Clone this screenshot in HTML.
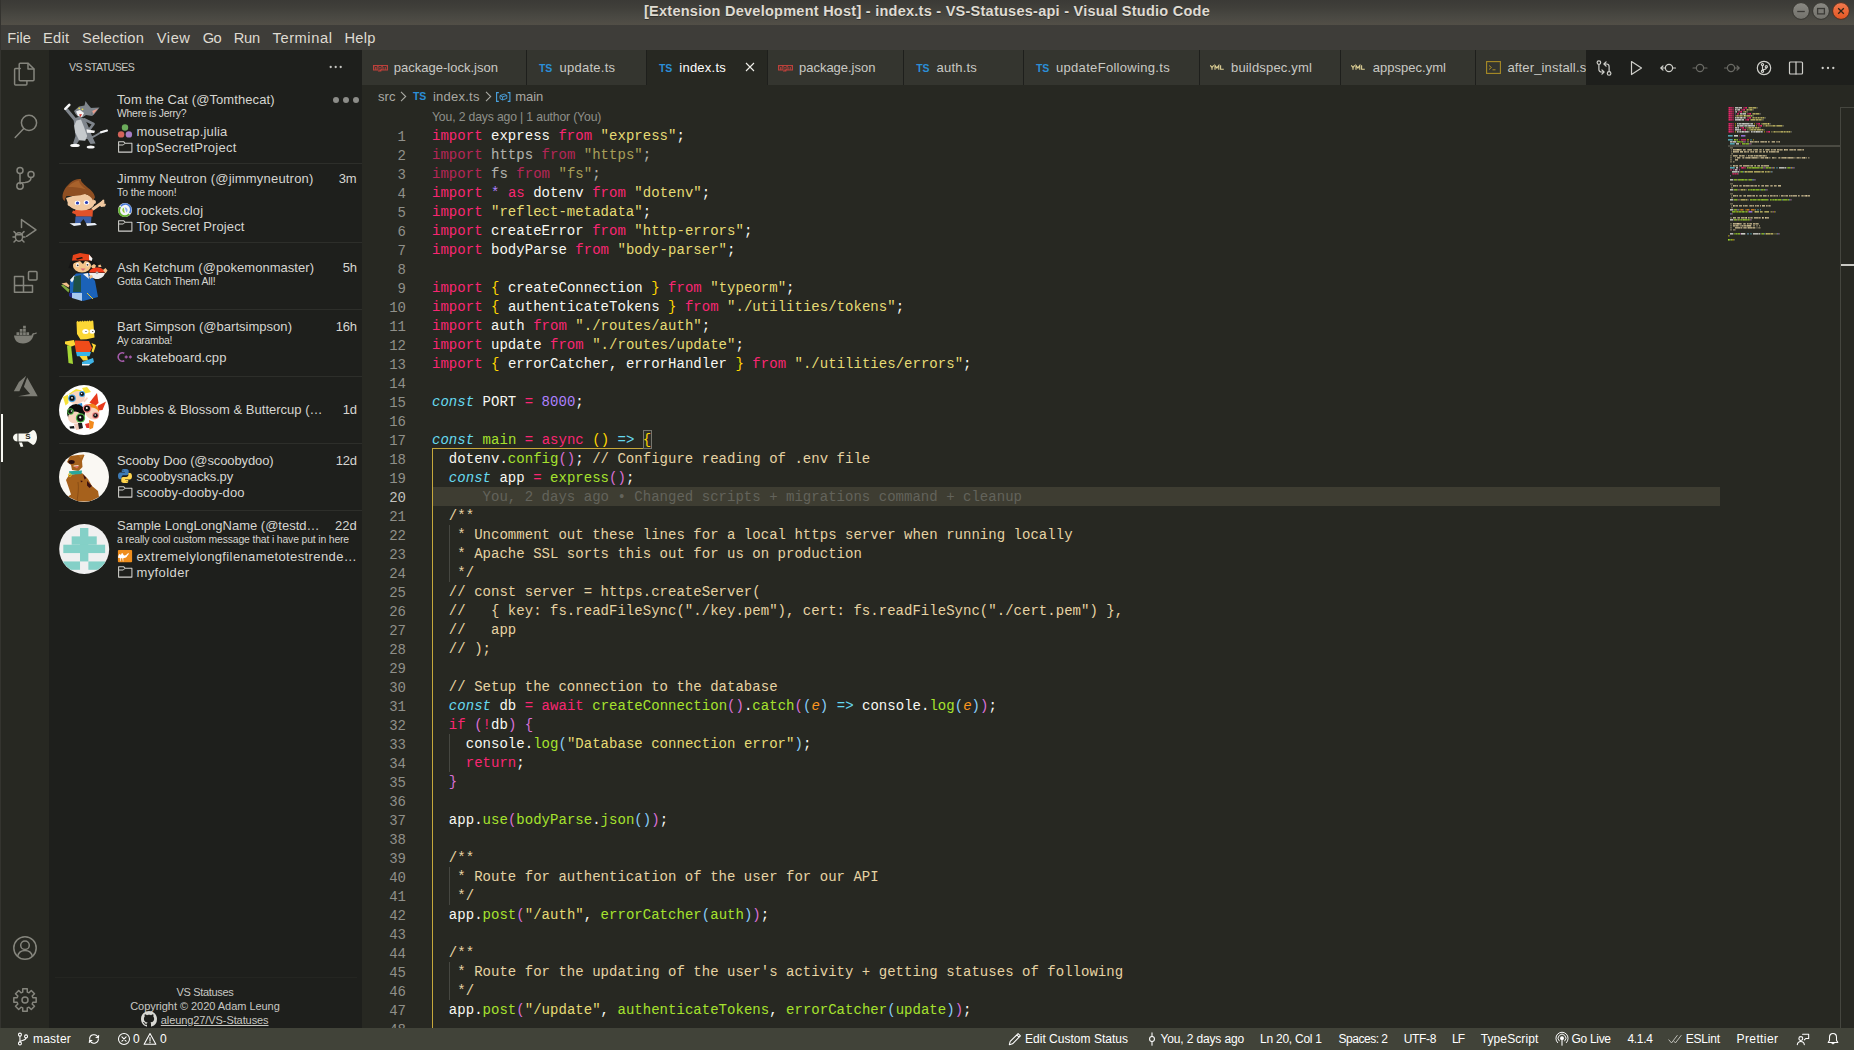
<!DOCTYPE html>
<html><head><meta charset="utf-8"><title>index.ts - VS-Statuses-api - Visual Studio Code</title>
<style>
*{box-sizing:border-box;margin:0;padding:0}
html,body{width:1854px;height:1050px;overflow:hidden;background:#272822;font-family:"Liberation Sans",sans-serif;color:#f8f8f2}
body{position:relative}
.a{position:absolute;white-space:pre}
svg{display:block;overflow:visible}
/* title / menu */
#title{left:0;top:0;width:1854px;height:25px;background:linear-gradient(#3b3a36,#403f3a 30%,#494842 65%,#524f47)}
#menu{left:0;top:25px;width:1854px;height:25px;background:#3e3d39}
.mi{position:absolute;top:1px;height:25px;line-height:25px;color:#dfdbd2;white-space:pre}
/* activity bar */
#act{left:0;top:50px;width:49px;height:978px;background:#272822}
/* sidebar */
#side{left:49px;top:50px;width:313px;height:978px;background:#1e1f1c;overflow:hidden}
.sep{position:absolute;left:10px;width:303px;height:1px;background:#2d2e2a}
.nm{color:#d8d8d3;line-height:16px}
.msg{color:#d0d0cb;line-height:12px}
.fl{color:#d8d8d3;line-height:16px}
/* editor */
#tabs{left:362px;top:50px;width:1492px;height:35px;background:#1e1f1c;overflow:hidden}
.tab{position:absolute;top:0;height:35px;background:#34352f;color:#ccccc7;line-height:35px;white-space:pre}
.tab.on{background:#272822;color:#fff}
#code{left:362px;top:126px;width:1358px;height:902px;overflow:hidden;font-family:"Liberation Mono",monospace;font-size:14px;letter-spacing:0.0273px;line-height:19px;color:#f8f8f2}
.ln{position:absolute;left:0;width:44px;text-align:right;color:#90908a;white-space:pre;height:19px;padding-top:2px}
.cl{position:absolute;left:70px;white-space:pre;height:19px;padding-top:1px}
.k{color:#f92672}.s{color:#e6db74}.c{color:#e6d3a3}.f{color:#a6e22e}.t{color:#66d9ef;font-style:italic}.ar{color:#66d9ef}
.n{color:#ae81ff}.p{color:#fd971f;font-style:italic}.b1{color:#ffd700}.b2{color:#da70d6}.b3{color:#87cefa}
.fade{opacity:.667}
.ig{position:absolute;width:1px;background:#464741}
/* status */
#status{left:0;top:1028px;width:1854px;height:22px;background:#414339;color:#fff;font-size:12px;line-height:22px}
.si{position:absolute;top:0;height:22px;line-height:22px;white-space:pre;color:#fff}
.bl{color:#63635b}

</style></head>
<body>
<div class="a" id="title"><div class="a" style="left:644px;top:0;height:23px;line-height:22px;font-weight:bold;font-size:14.5px;letter-spacing:0.257px;color:#dfdbd2;text-shadow:0 1px 0 rgba(0,0,0,.35)">[Extension Development Host] - index.ts - VS-Statuses-api - Visual Studio Code</div>
<svg class="a" style="left:1791px;top:1.200px" width="62" height="22" viewBox="0 0 62 22">
<defs><linearGradient id="gb" x1="0" y1="0" x2="0" y2="1"><stop offset="0" stop-color="#8a8983"/><stop offset="1" stop-color="#72716b"/></linearGradient>
<linearGradient id="gc" x1="0" y1="0" x2="0" y2="1"><stop offset="0" stop-color="#f27a4e"/><stop offset="1" stop-color="#e45622"/></linearGradient></defs>
<circle cx="10" cy="10" r="8.400" fill="url(#gb)" stroke="#35342f" stroke-width="1"/>
<circle cx="30" cy="10" r="8.400" fill="url(#gb)" stroke="#35342f" stroke-width="1"/>
<circle cx="50" cy="10" r="8.400" fill="url(#gc)" stroke="#4a3024" stroke-width="1"/>
<path d="M6.200 10.500h7.600" stroke="#3b3a36" stroke-width="1.300" fill="none"/>
<rect x="26.600" y="7.500" width="6.800" height="5.400" fill="#7b7a74" stroke="#3b3a36" stroke-width="1.300"/>
<path d="M47.200 7.200l5.600 5.600M52.800 7.200l-5.600 5.600" stroke="#2e2418" stroke-width="1.300" fill="none"/>
</svg>
</div>
<div class="a" id="menu">
<div class="mi" style="left:7.25px;font-size:14.667px;letter-spacing:0.031px">File</div>
<div class="mi" style="left:43px;font-size:14.667px;letter-spacing:0.309px">Edit</div>
<div class="mi" style="left:82px;font-size:14.667px;letter-spacing:0.189px">Selection</div>
<div class="mi" style="left:156.75px;font-size:14.667px;letter-spacing:0.559px">View</div>
<div class="mi" style="left:202.75px;font-size:14.667px;letter-spacing:-0.656px">Go</div>
<div class="mi" style="left:233.75px;font-size:14.667px;letter-spacing:-0.214px">Run</div>
<div class="mi" style="left:272.5px;font-size:14.667px;letter-spacing:0.576px">Terminal</div>
<div class="mi" style="left:344.5px;font-size:14.667px;letter-spacing:0.273px">Help</div>
</div>
<div class="a" id="act"><div class="a" style="left:0;top:0;width:1px;height:978px;background:#34342f"></div>
<svg class="a" style="left:11.8px;top:12.0px" width="24" height="24" viewBox="0 0 24 24" fill="none" stroke="#85857d" stroke-width="1.5" stroke-linejoin="round" stroke-linecap="round"><path d="M8.2 6.5H3.6a1 1 0 0 0-1 1V22a1 1 0 0 0 1 1h10.3a1 1 0 0 0 1-1v-3.2"/><path d="M8.2 1.2h8l5.8 5.8v10.8a1 1 0 0 1-1 1H8.2a1 1 0 0 1-1-1V2.2a1 1 0 0 1 1-1z"/><path d="M16 1.4V7h5.8"/></svg>
<svg class="a" style="left:13.5px;top:64.0px" width="24" height="24" viewBox="0 0 24 24" fill="none" stroke="#85857d" stroke-width="1.5" stroke-linejoin="round" stroke-linecap="round"><circle cx="15" cy="8.8" r="7.6"/><path d="M9.8 14.6L1.2 23.4"/></svg>
<svg class="a" style="left:13.0px;top:116.0px" width="24" height="24" viewBox="0 0 24 24" fill="none" stroke="#85857d" stroke-width="1.5" stroke-linejoin="round" stroke-linecap="round"><circle cx="7" cy="4.5" r="3"/><circle cx="7" cy="20" r="3.2"/><circle cx="18" cy="8.5" r="3"/><path d="M7 7.5v9.3"/><path d="M18 11.5c0 3.5-3 4.8-6 4.9-2.8 0-4.6.6-5 1.5"/></svg>
<svg class="a" style="left:13.3px;top:167.5px" width="24" height="24" viewBox="0 0 24 24" fill="none" stroke="#85857d" stroke-width="1.5" stroke-linejoin="round" stroke-linecap="round"><path d="M8.5 9.5V1.6L23 11.8 13.5 18.3"/><ellipse cx="6" cy="19" rx="3.6" ry="4.2"/><path d="M3.2 15.8L1 13.6M8.8 15.8L11 13.6M2.4 19H0M9.6 19H12M3 22L1 24M9 22l2 2M2.6 16.8h6.8"/></svg>
<svg class="a" style="left:12.600000000000001px;top:220.2px" width="24" height="24" viewBox="0 0 24 24" fill="none" stroke="#85857d" stroke-width="1.5" stroke-linejoin="round" stroke-linecap="round"><path d="M1.5 6.5h9v9h-9zM1.5 15.5h9v6.8h-9M10.5 15.5h9v6.8h-18v-6.8M10.5 15.5v6.8"/><rect x="15.5" y="1.5" width="8.5" height="8.5" rx="1"/></svg>
<svg class="a" style="left:12.5px;top:272.5px" width="24" height="24" viewBox="0 0 24 24" fill="#7e7e76" stroke="none" stroke-width="0" stroke-linejoin="round" stroke-linecap="round"><path d="M1 12.5h17.5c.5-1.8 1.5-3 3.2-2.3.8-.9 1.8-.7 2.3-.2-1 1-1.400 1.300-3.300 1.500C19.500 17 16 20.500 10 20.500 4.500 20.500 1.500 17.500 1 12.500z"/><path d="M3.500 9.200h2.700v2.700H3.500zM6.800 9.200h2.700v2.700H6.800zM10.100 9.200h2.700v2.700h-2.700zM13.400 9.200h2.700v2.700h-2.700zM6.800 6h2.700v2.700H6.800zM10.100 6h2.700v2.700h-2.700zM10.100 2.800h2.700v2.700h-2.700z"/></svg>
<svg class="a" style="left:13.0px;top:323.2px" width="24" height="24" viewBox="0 0 24 24" fill="#7e7e76" stroke="none" stroke-width="0" stroke-linejoin="round" stroke-linecap="round"><path d="M13.200 2.800L5.900 9.100 0.800 18.300h5.600zM14.200 4.500l-3.300 9.200 6.200 7.400-12 2.100h19.600z"/></svg>
<div class="a" style="left:1px;top:364px;width:2px;height:48px;background:#f8f8f2"></div>
<svg class="a" style="left:13.0px;top:376.0px" width="24" height="24" viewBox="0 0 24 24" fill="#f8f8f2" stroke="none" stroke-width="0" stroke-linejoin="round" stroke-linecap="round"><path d="M4.500 7.500A4.500 4 0 0 0 4.500 15.500z"/><path d="M5.400 7.500H15L20 4c2 0 4 3.500 4 7.300S22 19 20 19l-5-3.500H5.400z"/><path d="M5.900 16.400H9l1.300 4-2.600.700z"/></svg>
<div class="a" style="left:25.300px;top:382.200px;font-size:8px;font-weight:bold;color:#272822;line-height:9px">S</div>
<svg class="a" style="left:13.0px;top:886.0px" width="24" height="24" viewBox="0 0 24 24" fill="none" stroke="#85857d" stroke-width="1.5" stroke-linejoin="round" stroke-linecap="round"><circle cx="12" cy="12" r="11.200"/><circle cx="12" cy="9.300" r="4.300"/><path d="M4.600 20.300c1-4 4-5.800 7.400-5.800s6.400 1.800 7.400 5.800"/></svg>
<svg class="a" style="left:13.0px;top:938.0px" width="24" height="24" viewBox="0 0 24 24" fill="none" stroke="#85857d" stroke-width="1.5" stroke-linejoin="round" stroke-linecap="round"><path d="M9.73 4.12 L9.74 0.83 L14.26 0.83 L14.27 4.12 L15.97 4.83 L18.30 2.50 L21.50 5.70 L19.17 8.03 L19.88 9.73 L23.17 9.74 L23.17 14.26 L19.88 14.27 L19.17 15.97 L21.50 18.30 L18.30 21.50 L15.97 19.17 L14.27 19.88 L14.26 23.17 L9.74 23.17 L9.73 19.88 L8.03 19.17 L5.70 21.50 L2.50 18.30 L4.83 15.97 L4.12 14.27 L0.83 14.26 L0.83 9.74 L4.12 9.73 L4.83 8.03 L2.50 5.70 L5.70 2.50 L8.03 4.83Z"/><circle cx="12" cy="12" r="3"/></svg>
</div>
<div class="a" style="left:0;top:0;width:1px;height:50px;background:#34332f"></div>
<div class="a" id="side">
<div class="a" style="left:20px;top:7px;line-height:18px;color:#c5c5c0"><span style="font-size:10.6px;letter-spacing:-0.567px;">VS STATUSES</span></div>
<svg class="a" style="left:280px;top:10px" width="14" height="14" viewBox="0 0 14 14"><circle cx="1.700" cy="7" r="1.150" fill="#c5c5c0"/><circle cx="6.700" cy="7" r="1.150" fill="#c5c5c0"/><circle cx="11.700" cy="7" r="1.150" fill="#c5c5c0"/></svg>
<div class="sep" style="top:113px"></div>
<div class="sep" style="top:192px"></div>
<div class="sep" style="top:259px"></div>
<div class="sep" style="top:326px"></div>
<div class="sep" style="top:393px"></div>
<div class="sep" style="top:460px"></div>
<div class="a" style="left:68px;top:41px;line-height:16px;color:#d6d6d1"><span style="font-size:13px;letter-spacing:0.086px;">Tom the Cat (@Tomthecat)</span></div>
<svg class="a" style="left:283px;top:46px" width="28" height="8" viewBox="0 0 28 8"><circle cx="4" cy="4" r="3" fill="#8c8c88"/><circle cx="14" cy="4" r="3" fill="#8c8c88"/><circle cx="24" cy="4" r="3" fill="#8c8c88"/></svg>
<div class="a" style="left:68px;top:56px;line-height:12px;color:#d6d6d1"><span style="font-size:10.4px;letter-spacing:-0.237px;">Where is Jerry?</span></div>
<svg class="a" style="left:68px;top:73px" width="16" height="16" viewBox="0 0 16 16"><circle cx="8" cy="4.500" r="3.200" fill="#6bab5b"/><circle cx="4.100" cy="11.400" r="3.200" fill="#d5635a"/><circle cx="11.900" cy="11.400" r="3.200" fill="#a67dc4"/></svg><div class="a" style="left:87.5px;top:73px;line-height:16px;color:#d6d6d1"><span style="font-size:13px;letter-spacing:0.190px;">mousetrap.julia</span></div>
<svg class="a" style="left:68px;top:89px" width="16" height="16" viewBox="0 0 16 16"><path d="M1.600 2.700h5l1.300 1.500h7v8.900H1.600z" fill="none" stroke="#d0d0cb" stroke-width="1.050" stroke-linejoin="round"/><path d="M1.600 6h4.700l1.600-1.600" fill="none" stroke="#d0d0cb" stroke-width="1"/></svg><div class="a" style="left:87.5px;top:89px;line-height:16px;color:#d6d6d1"><span style="font-size:13px;letter-spacing:0.243px;">topSecretProject</span></div>
<div class="a" style="left:68px;top:120px;line-height:16px;color:#d6d6d1"><span style="font-size:13px;letter-spacing:0.193px;">Jimmy Neutron (@jimmyneutron)</span></div><div class="a" style="left:289.70000000000005px;top:120px;line-height:16px;color:#d6d6d1"><span style="font-size:13px;letter-spacing:-0.081px;">3m</span></div>
<div class="a" style="left:68px;top:135px;line-height:12px;color:#d6d6d1"><span style="font-size:10.4px;letter-spacing:-0.048px;">To the moon!</span></div>
<svg class="a" style="left:68px;top:152px" width="16" height="16" viewBox="0 0 16 16"><circle cx="8" cy="8" r="7" fill="#f4f6f8"/><path d="M3.800 4.200A5.600 5.600 0 0 1 12.700 11" fill="none" stroke="#4a7bd6" stroke-width="1.700"/><path d="M12.200 12A5.600 5.600 0 0 1 3.300 5" fill="none" stroke="#63b132" stroke-width="1.900"/><path d="M8 5.200a3 3 0 0 1 1.500 5.300L7.600 5.300z" fill="#8fb5f0"/><path d="M6.300 5.800a3 3 0 0 0 1.500 5.200L6.800 6z" fill="#8fce3e"/></svg><div class="a" style="left:87.5px;top:152px;line-height:16px;color:#d6d6d1"><span style="font-size:13px;letter-spacing:0.147px;">rockets.cloj</span></div>
<svg class="a" style="left:68px;top:168px" width="16" height="16" viewBox="0 0 16 16"><path d="M1.600 2.700h5l1.300 1.500h7v8.900H1.600z" fill="none" stroke="#d0d0cb" stroke-width="1.050" stroke-linejoin="round"/><path d="M1.600 6h4.700l1.600-1.600" fill="none" stroke="#d0d0cb" stroke-width="1"/></svg><div class="a" style="left:87.5px;top:168px;line-height:16px;color:#d6d6d1"><span style="font-size:13px;letter-spacing:0.099px;">Top Secret Project</span></div>
<div class="a" style="left:68px;top:209px;line-height:16px;color:#d6d6d1"><span style="font-size:13px;letter-spacing:0.036px;">Ash Ketchum (@pokemonmaster)</span></div><div class="a" style="left:293.8px;top:209px;line-height:16px;color:#d6d6d1"><span style="font-size:13px;letter-spacing:-0.334px;">5h</span></div>
<div class="a" style="left:68px;top:224px;line-height:12px;color:#d6d6d1"><span style="font-size:10.4px;letter-spacing:-0.145px;">Gotta Catch Them All!</span></div>
<div class="a" style="left:68px;top:268px;line-height:16px;color:#d6d6d1"><span style="font-size:13px;letter-spacing:0.025px;">Bart Simpson (@bartsimpson)</span></div><div class="a" style="left:286.8px;top:268px;line-height:16px;color:#d6d6d1"><span style="font-size:13px;letter-spacing:-0.301px;">16h</span></div>
<div class="a" style="left:68px;top:283px;line-height:12px;color:#d6d6d1"><span style="font-size:10.4px;letter-spacing:-0.286px;">Ay caramba!</span></div>
<svg class="a" style="left:68px;top:299px" width="16" height="16" viewBox="0 0 16 16"><path d="M7.300 4.300a4.200 4.200 0 1 0 0 7.400" fill="none" stroke="#a35aa8" stroke-width="1.600"/><path d="M7.700 8h3M9.200 6.500v3M11.900 8h3M13.400 6.500v3" stroke="#a35aa8" stroke-width="1.300" fill="none"/></svg><div class="a" style="left:87.5px;top:299px;line-height:16px;color:#d6d6d1"><span style="font-size:13px;letter-spacing:0.078px;">skateboard.cpp</span></div>
<div class="a" style="left:68px;top:351px;line-height:16px;color:#d6d6d1"><span style="font-size:13px;letter-spacing:0.012px;">Bubbles &amp; Blossom &amp; Buttercup (…</span></div><div class="a" style="left:293.8px;top:351px;line-height:16px;color:#d6d6d1"><span style="font-size:13px;letter-spacing:-0.334px;">1d</span></div>
<div class="a" style="left:68px;top:402px;line-height:16px;color:#d6d6d1"><span style="font-size:13px;letter-spacing:-0.116px;">Scooby Doo (@scoobydoo)</span></div><div class="a" style="left:286.8px;top:402px;line-height:16px;color:#d6d6d1"><span style="font-size:13px;letter-spacing:-0.301px;">12d</span></div>
<svg class="a" style="left:68px;top:418px" width="16" height="16" viewBox="0 0 16 16"><path d="M7.800 1c-3.200 0-3 1.400-3 1.400v1.700h3.100v.5H3.400S1 4.400 1 7.900c0 3.400 2.100 3.300 2.100 3.300h1.500V9.300s-.1-2.100 2.100-2.100h3s2 0 2-1.900V2.900S12 1 7.800 1z" fill="#3d7ab5"/><path d="M8.200 15.100c3.200 0 3-1.400 3-1.400V12H8.100v-.5h4.500s2.400.2 2.400-3.300c0-3.400-2.100-3.300-2.100-3.300h-1.500v1.900s.1 2.100-2.100 2.100h-3s-2 0-2 1.900v2.400s-.3 1.900 3.900 1.900z" fill="#ffd54d"/><circle cx="6" cy="2.600" r=".6" fill="#1e3a5a"/><circle cx="10" cy="13.500" r=".6" fill="#8a6d1a"/></svg><div class="a" style="left:87.5px;top:418px;line-height:16px;color:#d6d6d1"><span style="font-size:13px;letter-spacing:-0.167px;">scoobysnacks.py</span></div>
<svg class="a" style="left:68px;top:434px" width="16" height="16" viewBox="0 0 16 16"><path d="M1.600 2.700h5l1.300 1.500h7v8.900H1.600z" fill="none" stroke="#d0d0cb" stroke-width="1.050" stroke-linejoin="round"/><path d="M1.600 6h4.700l1.600-1.600" fill="none" stroke="#d0d0cb" stroke-width="1"/></svg><div class="a" style="left:87.5px;top:434px;line-height:16px;color:#d6d6d1"><span style="font-size:13px;letter-spacing:0.064px;">scooby-dooby-doo</span></div>
<div class="a" style="left:68px;top:467px;line-height:16px;color:#d6d6d1"><span style="font-size:13px;letter-spacing:-0.001px;">Sample LongLongName (@testd…</span></div><div class="a" style="left:286.1px;top:467px;line-height:16px;color:#d6d6d1"><span style="font-size:13px;letter-spacing:-0.068px;">22d</span></div>
<div class="a" style="left:68px;top:482px;line-height:12px;color:#d6d6d1"><span style="font-size:10.4px;letter-spacing:-0.148px;">a really cool custom message that i have put in here</span></div>
<svg class="a" style="left:68px;top:498px" width="16" height="16" viewBox="0 0 16 16"><rect x=".9" y="2" width="14.200" height="12.200" rx="1" fill="#ee8d1c"/><path d="M1 9.800c.2-1.700.7-3.700 1.600-3.900.7.400.9 1.100 1.400.9.500-.700.700-1.900 1.300-1.700.7.500.8 1.700 1.600 2.100 1.200.5 2.500-.1 3.100-1.100.5-.7 1.200-.8 2-.7l-.3.800c-1 .5-1.300 1.900-2.100 2.800-.7.800-2 1-3.400 1.200l.2 3.200h-.5l-.6-3.100-1.500-.1-.3 3h-.5l-.1-3.100z" fill="#fff"/></svg><div class="a" style="left:87.5px;top:498px;line-height:16px;color:#d6d6d1"><span style="font-size:13px;letter-spacing:0.379px;">extremelylongfilenametotestrende…</span></div>
<svg class="a" style="left:68px;top:514px" width="16" height="16" viewBox="0 0 16 16"><path d="M1.600 2.700h5l1.300 1.500h7v8.900H1.600z" fill="none" stroke="#d0d0cb" stroke-width="1.050" stroke-linejoin="round"/><path d="M1.600 6h4.700l1.600-1.600" fill="none" stroke="#d0d0cb" stroke-width="1"/></svg><div class="a" style="left:87.5px;top:514px;line-height:16px;color:#d6d6d1"><span style="font-size:13px;letter-spacing:0.393px;">myfolder</span></div>
<svg class="a" style="left:7px;top:42px" width="56" height="64" viewBox="0 0 56 64">
<path d="M35.500 45.500c3-1 6.500-3.500 9-5l6.500-1.800" fill="none" stroke="#7f858c" stroke-width="1.900" stroke-linecap="round"/>
<path d="M45 40.200l6-1.700" fill="none" stroke="#f4f4f4" stroke-width="2" stroke-linecap="round"/>
<path d="M18.500 27L11 18" fill="none" stroke="#7f858c" stroke-width="3.300" stroke-linecap="round"/>
<path d="M9.300 16.800l4-4" stroke="#f6f6f6" stroke-width="2.600" stroke-linecap="round"/>
<path d="M17.500 26.500l6.500-2 5 2.500 4 9 3 8 3.500 7.500-5 .5-3-5h-7.500l-3.500 5.500-3.500-1 2.500-7.500-1-8z" fill="#7f858c"/>
<path d="M28.500 27.500l9 4.500-4.300 5.800" fill="none" stroke="#7f858c" stroke-width="2.700" stroke-linejoin="round" stroke-linecap="round"/>
<path d="M30.500 37.300l8.500 1.500-.800 2.200-7.200-.3z" fill="#f4f4f4"/>
<path d="M20.500 28.500l4.500-1 3 7.500 3.200 9-2 4.700-6.200-.5-3.800-8-1-6.500z" fill="#c6cacd"/>
<ellipse cx="19" cy="53.400" rx="4.800" ry="1.700" fill="#f8f8f8"/><ellipse cx="34.700" cy="55" rx="4" ry="1.600" fill="#f8f8f8"/>
<path d="M18 19l5-4.500 5.500-1 1-4.500 2.500 3.500 3 3.500 1 8-6-1-3 2-5-.5-2.500-2.500z" fill="#7f858c"/>
<path d="M34 16l9.500-.5-5.500 7-2 1.500z" fill="#7f858c"/><path d="M36.200 19l5.800-2.500-4.500 5.500z" fill="#e89b8b"/>
<path d="M20 19.500l4-1.500 4 3-2 4-4-1z" fill="#f4f4f4"/><path d="M23 22.500l3-.5-1.500 3z" fill="#d0302b"/>
<circle cx="23.200" cy="16.300" r=".9" fill="#e5d94b"/><circle cx="26.500" cy="17.300" r=".9" fill="#e5d94b"/>
</svg>
<svg class="a" style="left:7px;top:121px" width="56" height="64" viewBox="0 0 56 64">
<path d="M37 38l10-7" stroke="#f0c8a0" stroke-width="3" stroke-linecap="round"/>
<path d="M43 33l4-4.500 1.500.5-1.500 3 3 1-1 2.500-4 .5z" fill="#f0c8a0"/>
<path d="M17 39.500l4 1-1 3-4-1.500z" fill="#e2522a"/>
<path d="M19 39l18-.5-.5 7.200-16.500-.2z" fill="#e2522a"/>
<path d="M19.500 45.500h16l-.5 6.700h-5l-2.500-4.200-3.500 4.200h-5z" fill="#3d5fa5"/>
<path d="M13.500 52.200l11-.2.500 2-7 1z" fill="#e9eef8"/><path d="M30 52.300l9-.3 2 2-10 1z" fill="#e9eef8"/>
<path d="M10 27l17-5 10 4 1 7-5 5-13 .5-7-3.500z" fill="#f0c8a0"/><ellipse cx="25.500" cy="31.500" rx="13" ry="8" fill="#f0c8a0"/>
<circle cx="13.500" cy="33" r="2" fill="#f0c8a0"/><circle cx="38" cy="31" r="2" fill="#f0c8a0"/>
<ellipse cx="21.500" cy="32" rx="2.800" ry="2.200" fill="#fff"/><ellipse cx="30.500" cy="31.500" rx="2.800" ry="2.200" fill="#fff"/>
<circle cx="21.500" cy="32" r="1.600" fill="#2b3fb5"/><circle cx="30.500" cy="31.500" r="1.600" fill="#2b3fb5"/>
<path d="M6.500 26c0-6 4-11 8-14.500 3-2.500 6-3.800 10.500-3.500-1 1.500 2.500 5 6 8 4 3 7.500 6 8 10.500l-2 3c-1.500-3-4-5.500-8-6.500-6 2-12 2-18.500 2-1 1.500-1.500 3-1.500 5-1.500-1-2.500-2-2.500-4z" fill="#8f4f22"/>
<path d="M12 16c3-3 6-5.500 11-6.500 0 3 3 6 7 9-6-2-12-2.500-18-2.500z" fill="#a8622c"/>
</svg>
<svg class="a" style="left:7px;top:196px" width="56" height="64" viewBox="0 0 56 64">
<path d="M12.500 22l2-6 6-3h14l7.500 5-4.500 3.500-3 3z" fill="#151515"/>
<path d="M5.500 37.500l5-1 3 3-1 2z" fill="#f3c089"/><path d="M5 39.500l2-1 6.500 5-1 3z" fill="#7ea83e"/>
<path d="M14 34l6-6.500 13-.5 6 8 3 16-15 4-13-7z" fill="#1b62b8"/>
<path d="M14 34l4-4.500 2 1-4 6z" fill="#f2f2f2"/><path d="M27 28l5-1 1 6z" fill="#f2f2f2"/>
<path d="M18 30.500l7-1.500v17h-8z" fill="#1f5045"/>
<path d="M16 47h10v8l-10-3z" fill="#a6c8ef"/>
<path d="M13 47l3 0v5l-3-2z" fill="#232a8a"/>
<path d="M31 47l6 6" stroke="#e8c832" stroke-width="1"/>
<ellipse cx="26" cy="20" rx="9" ry="6.500" fill="#f5c58b"/>
<path d="M18 17l6-2 3 3 2-3 6 1-1-3H18z" fill="#151515"/>
<ellipse cx="21.500" cy="19" rx="1.500" ry="2" fill="#fff"/><ellipse cx="31.500" cy="18.500" rx="1.500" ry="2" fill="#fff"/>
<circle cx="21.700" cy="19.300" r=".9" fill="#333"/><circle cx="31.500" cy="18.800" r=".9" fill="#333"/>
<path d="M24.500 22.500h5l-2.500 2.500z" fill="#d96a7a"/>
<path d="M16 14.500l1-5.500 7-2 9 1.500 3 3.500-1 2.500H16z" fill="#e8431a"/><path d="M33 8.500l3.500 4-.8 2.500-2.500-1z" fill="#f4f4f4"/>
<path d="M20 12.500l6-1.500 1 1.200-6 1.500z" fill="#151515"/>
<path d="M33 26.500c1-3 3.500-5 8-5s7 2 8 5z" fill="#f03a1a"/>
<path d="M33 27h16c-1 3.500-4 6-8 6s-7-2.500-8-6z" fill="#eeeeee"/><circle cx="41" cy="26.800" r="1.400" fill="#aaa"/>
<path d="M47 24l2.500-2 2 2.500-2 3z" fill="#f3c089"/><path d="M33 30l3-1 1 2-3 2z" fill="#f3c089"/>
<path d="M35 20l3-2 2 1.500-1 2.500h-3z" fill="#f3c089"/><path d="M42 19.500l2.500-1 1 2.500h-3z" fill="#f3c089"/>
</svg>
<svg class="a" style="left:7px;top:262px" width="56" height="64" viewBox="0 0 56 64">
<path d="M11 33.500l4-.5 2 19-4.500-1z" fill="#a4d636"/>
<path d="M9 29.500l9-1.500 1.500 5-4 1.500-6.500-2.500z" fill="#fcd735"/>
<path d="M35.500 31l4.500 2-2.500 7.500-2-1 1.500-5z" fill="#fcd735"/>
<path d="M19 28.500l14 .5 3 7-2 4H20l-1-6z" fill="#f04c1a"/>
<path d="M20 40h15l-1.500 4.200H21z" fill="#36b5e8"/>
<path d="M23.500 44h7.500l1 4.500h-5z" fill="#fcd735"/>
<path d="M26 50l11-4 1 4-5 3h-7z" fill="#3fb3e6"/><path d="M26 52h8l-1 1.500h-7z" fill="#f2f2f2"/>
<path d="M20.500 10l1.200-1.200 1.200 1.100 1.200-1.200 1.200 1.100 1.200-1.200 1.200 1.100 1.200-1.200 1.200 1.100 1.200-1.200 1.200 1.100 1.200-1.200 1.200 1.100 1.200-1.200 1.200 1.100L38.500 25.500l-8 1.700-6 .3-3.500-5.500z" fill="#fcd735"/>
<ellipse cx="29.500" cy="19.500" rx="3.200" ry="2.500" fill="#fff"/><ellipse cx="36.300" cy="19.500" rx="2.700" ry="2.200" fill="#fff"/>
<circle cx="30" cy="19.500" r=".6" fill="#222"/><circle cx="36.800" cy="19.500" r=".6" fill="#222"/>
</svg>
<svg class="a" style="left:7px;top:330px" width="56" height="64" viewBox="0 0 56 64">
<circle cx="28" cy="30" r="25" fill="#ffffff"/>
<path d="M7 17l5-2.500 .500 8.500-3 2.500z" fill="#f7e23a"/><path d="M12 14.500l8-5.500 6 1.500-9 4z" fill="#f7e23a"/><path d="M26 8l5-1 4 5-6 1.500z" fill="#f7e23a"/>
<ellipse cx="21" cy="17.500" rx="8.500" ry="6.300" transform="rotate(-18 21 17.500)" fill="#f8d4c0"/>
<circle cx="16" cy="18.200" r="3.800" fill="#3d9ddb"/><circle cx="16" cy="18.200" r="2.600" fill="#111"/><circle cx="16" cy="17.800" r=".9" fill="#fff"/>
<circle cx="26" cy="14" r="3" fill="#3d9ddb"/><circle cx="26" cy="14" r="2" fill="#111"/><circle cx="25.600" cy="13.500" r=".7" fill="#fff"/>
<path d="M27 21l4-4 1 1.500-3.500 4z" fill="#f8d4c0"/>
<path d="M22 24l4-1 .500 5-3.500 1z" fill="#2f8ed6"/>
<path d="M33.500 22.500l7.500-9.500 1.500 10-3.500 3z" fill="#e83a1c"/><path d="M41.500 26l8.500-4.500-3.500 8.500-4.500 .500z" fill="#e83a1c"/>
<circle cx="20" cy="33" r="9" fill="#0c0c0c"/>
<path d="M28 27c3-3 8-4.500 12-1.500 3 2.500 3.500 6 3 9l-8-4z" fill="#f28a1c"/>
<ellipse cx="36.500" cy="33.500" rx="7.300" ry="5.800" transform="rotate(25 36.500 33.500)" fill="#f8d4c0"/>
<circle cx="31" cy="28.500" r="4.200" fill="#f08080"/><circle cx="31" cy="28.500" r="3" fill="#111"/><circle cx="30.800" cy="28" r="1" fill="#fff"/>
<circle cx="39.500" cy="35.500" r="3.300" fill="#f08080"/><circle cx="39.500" cy="35.500" r="2.300" fill="#111"/><circle cx="39.200" cy="35" r=".8" fill="#fff"/>
<ellipse cx="19" cy="37.500" rx="7" ry="6" fill="#f8d4c0"/>
<circle cx="14.500" cy="31.500" r="3.200" fill="#4fb848"/><circle cx="14.500" cy="31.500" r="2.200" fill="#111"/><circle cx="15.500" cy="31" r=".8" fill="#fff"/>
<circle cx="24.500" cy="38" r="4.700" fill="#4fb848"/><circle cx="24.500" cy="38" r="3.400" fill="#111"/><circle cx="24.200" cy="37.300" r="1.100" fill="#fff"/>
<path d="M33 40l5 2-1 6-3.500 1.500z" fill="#f28a1c"/>
<path d="M18 44l6-1 2 6-6 1z" fill="#f2c9b8"/><path d="M13.500 46.500l4.500-.5 .500 2.500-4.500 0z" fill="#111"/><path d="M22 43l4 0 1 5-4 1z" fill="#1c1c1c"/>
<path d="M29 44l4-1 .500 5-3 0z" fill="#e2352a"/>
</svg>
<svg class="a" style="left:7px;top:396px" width="56" height="64" viewBox="0 0 56 64">
<defs><clipPath id="sc"><circle cx="28" cy="31" r="25"/></clipPath></defs>
<circle cx="28" cy="31" r="25" fill="#faf8f3"/>
<g clip-path="url(#sc)">
<path d="M10 34l3-5 13-2 6 6 4 7 6 5 1 6-9 4.500H22l-10-5 3-2-2-6z" fill="#a6611c"/>
<path d="M11 16l3-6 8-1 6.500 0-2.500 6 .500 6-4 4-6.500-1-1-5z" fill="#a6611c"/>
<path d="M22 9l6-.5-3 4z" fill="#b87428"/>
<ellipse cx="15.500" cy="16" rx="3.200" ry="1.900" fill="#2a0f0f"/>
<path d="M18 20.500l5-.5-2 2.500z" fill="#e06a60"/><path d="M17.500 20l5-.5" stroke="#fff" stroke-width=".8"/>
<path d="M13 25.200l13-.7-.5 3.600-12 .6z" fill="#2aa79b"/><circle cx="13.800" cy="29" r="1.500" fill="none" stroke="#e6c628" stroke-width=".9"/>
<path d="M27 28l3.500 4-2 1.500z" fill="#3a1010"/><path d="M31 35l5 5-2.500 2-2.500-2.500z" fill="#3a1010"/><path d="M24.500 34.500l2.500.5-2 1.500z" fill="#3a1010"/>
<path d="M22 36c1 6 0 12-1 19" fill="none" stroke="#7d4512" stroke-width=".7"/>
</g>
</svg>
<svg class="a" style="left:7px;top:468px" width="56" height="64" viewBox="0 0 56 64"><defs><clipPath id="ic"><circle cx="28.200" cy="31" r="24.800"/></clipPath></defs><circle cx="28.200" cy="31" r="25" fill="#f0f0f0"/><g clip-path="url(#ic)"><rect x="24.02" y="10.00" width="8.36" height="33.44" fill="#84d0c7"/><rect x="15.66" y="18.36" width="25.08" height="8.36" fill="#84d0c7"/><rect x="7.30" y="26.72" width="41.80" height="8.36" fill="#84d0c7"/><rect x="7.30" y="43.44" width="16.72" height="8.36" fill="#84d0c7"/><rect x="32.38" y="43.44" width="16.72" height="8.36" fill="#84d0c7"/></g></svg>
<div class="a" style="left:6px;top:927px;width:302px;height:1px;background:#242521"></div>
<div class="a" style="left:127.5px;top:934px;line-height:14px;color:#c8c8c3"><span style="font-size:11px;letter-spacing:-0.322px;">VS Statuses</span></div>
<div class="a" style="left:81.19999999999999px;top:948px;line-height:14px;color:#c8c8c3"><span style="font-size:11px;letter-spacing:-0.037px;">Copyright © 2020 Adam Leung</span></div>
<div class="a" style="left:111.80000000000001px;top:962px;line-height:14px;color:#c8c8c3;text-decoration:underline"><span style="font-size:11px;letter-spacing:-0.088px;">aleung27/VS-Statuses</span></div>
<svg class="a" style="left:92px;top:961px" width="16" height="16" viewBox="0 0 16 16"><path fill="#d8d8d3" d="M8 0C3.580 0 0 3.580 0 8c0 3.540 2.290 6.530 5.470 7.590.4.070.55-.17.55-.38 0-.19-.010-.82-.010-1.490-2.010.37-2.530-.49-2.690-.94-.09-.23-.48-.94-.82-1.130-.28-.15-.68-.52-.010-.53.630-.010 1.080.58 1.230.82.720 1.210 1.870.87 2.330.66.070-.52.280-.87.510-1.070-1.780-.2-3.640-.89-3.640-3.950 0-.87.310-1.590.82-2.150-.08-.2-.36-1.020.08-2.120 0 0 .67-.21 2.200.82.640-.18 1.320-.27 2-.27.680 0 1.360.09 2 .27 1.530-1.040 2.200-.82 2.200-.82.440 1.100.16 1.920.08 2.120.51.560.82 1.270.82 2.150 0 3.070-1.870 3.750-3.650 3.950.29.250.54.730.54 1.480 0 1.070-.010 1.930-.010 2.200 0 .21.150.46.550.38A8.013 8.013 0 0 0 16 8c0-4.420-3.580-8-8-8z"/></svg>
</div>
<div class="a" id="tabs">
<div class="tab" style="left:0.0px;width:164.0px"></div>
<svg class="a" style="left:10.5px;top:14.700px" width="15" height="7" viewBox="0 0 15 7"><path d="M0 0h15v5.400H8.400V6.600H5V5.400H0z" fill="#bd413b"/><path d="M1.700 4.500V1.500h2.200v3M5.900 5.600V1.500h2.200v2.400H6.200M10 4.500V1.500h3.400v3M11.700 1.800v2.700" fill="none" stroke="#34352f" stroke-width=".95"/></svg>
<div class="a" style="left:31.80000000000001px;top:-1px;height:35px;line-height:35px;color:#c9c9c4"><span style="font-size:13px;letter-spacing:0.008px;">package-lock.json</span></div>
<div class="tab" style="left:165.0px;width:118.8px"></div>
<div class="a" style="left:177.0px;top:0;height:35px;line-height:36px;font-size:10.500px;font-weight:bold;color:#2b8ed6;letter-spacing:-.2px">TS</div>
<div class="a" style="left:197.5px;top:-1px;height:35px;line-height:35px;color:#c9c9c4"><span style="font-size:13px;letter-spacing:0.267px;">update.ts</span></div>
<div class="tab on" style="left:284.6px;width:120.0px"></div>
<div class="a" style="left:297.1px;top:0;height:35px;line-height:36px;font-size:10.500px;font-weight:bold;color:#2b8ed6;letter-spacing:-.2px">TS</div>
<div class="a" style="left:317.29999999999995px;top:-1px;height:35px;line-height:35px;color:#ffffff"><span style="font-size:13px;letter-spacing:0.236px;">index.ts</span></div>
<div class="tab" style="left:405.6px;width:135.4px"></div>
<svg class="a" style="left:416.20000000000005px;top:14.700px" width="15" height="7" viewBox="0 0 15 7"><path d="M0 0h15v5.400H8.400V6.600H5V5.400H0z" fill="#bd413b"/><path d="M1.700 4.500V1.500h2.200v3M5.900 5.600V1.500h2.200v2.400H6.200M10 4.500V1.500h3.400v3M11.700 1.800v2.700" fill="none" stroke="#34352f" stroke-width=".95"/></svg>
<div class="a" style="left:437px;top:-1px;height:35px;line-height:35px;color:#c9c9c4"><span style="font-size:13px;letter-spacing:-0.019px;">package.json</span></div>
<div class="tab" style="left:542.0px;width:119.0px"></div>
<div class="a" style="left:554.2px;top:0;height:35px;line-height:36px;font-size:10.500px;font-weight:bold;color:#2b8ed6;letter-spacing:-.2px">TS</div>
<div class="a" style="left:574.5px;top:-1px;height:35px;line-height:35px;color:#c9c9c4"><span style="font-size:13px;letter-spacing:0.210px;">auth.ts</span></div>
<div class="tab" style="left:662.0px;width:174.5px"></div>
<div class="a" style="left:674.0px;top:0;height:35px;line-height:36px;font-size:10.500px;font-weight:bold;color:#2b8ed6;letter-spacing:-.2px">TS</div>
<div class="a" style="left:694px;top:-1px;height:35px;line-height:35px;color:#c9c9c4"><span style="font-size:13px;letter-spacing:0.311px;">updateFollowing.ts</span></div>
<div class="tab" style="left:837.5px;width:140.5px"></div>
<svg class="a" style="left:848px;top:15.200px" width="14" height="5" viewBox="0 0 14 5" fill="none" stroke="#e0d296" stroke-width="1.100"><path d="M.3.3L2 2.500 3.700.3M2 2.500v2.200M5 4.700V.5l1.900 2.600L8.800.5v4.200M10.600.3v4h3.200"/></svg>
<div class="a" style="left:869px;top:-1px;height:35px;line-height:35px;color:#c9c9c4"><span style="font-size:13px;letter-spacing:0.172px;">buildspec.yml</span></div>
<div class="tab" style="left:979.0px;width:133.6px"></div>
<svg class="a" style="left:989px;top:15.200px" width="14" height="5" viewBox="0 0 14 5" fill="none" stroke="#e0d296" stroke-width="1.100"><path d="M.3.3L2 2.500 3.700.3M2 2.500v2.200M5 4.700V.5l1.900 2.600L8.800.5v4.200M10.600.3v4h3.200"/></svg>
<div class="a" style="left:1010.8px;top:-1px;height:35px;line-height:35px;color:#c9c9c4"><span style="font-size:13px;letter-spacing:0.020px;">appspec.yml</span></div>
<div class="tab" style="left:1113.6px;width:164.4px"></div>
<svg class="a" style="left:1123.7px;top:11px" width="15" height="13" viewBox="0 0 15 13"><rect x=".6" y=".6" width="13.800" height="11.800" fill="none" stroke="#a98c25" stroke-width="1.100"/><path d="M3 4.500l2.500 2L3 8.500M6.500 8.800h3" fill="none" stroke="#a98c25" stroke-width="1"/></svg>
<div class="a" style="left:1145.4px;top:-1px;height:35px;line-height:35px;color:#c9c9c4"><span style="font-size:13px;letter-spacing:0.155px;">after_install.sh</span></div>
<svg class="a" style="left:383px;top:12px" width="10" height="10" viewBox="0 0 10 10"><path d="M1 1l8 8M9 1l-8 8" stroke="#f0f0ea" stroke-width="1.100" fill="none"/></svg>
<div class="a" style="left:1223.5px;top:0;width:268.5px;height:35px;background:#1e1f1c"></div>
<svg class="a" style="left:1234px;top:10px" width="16" height="16" viewBox="0 0 16 16" fill="none" stroke="#d0d0cb" stroke-width="1.200" stroke-linecap="round" stroke-linejoin="round"><circle cx="2.900" cy="2.600" r="1.800"/><path d="M2.900 4.500v5a2.500 2.500 0 0 0 2.500 2.500h2.400M5.900 9.800l2.200 2.200-2.200 2.200"/><circle cx="13.100" cy="13.400" r="1.800"/><path d="M13.100 11.500v-5a2.500 2.500 0 0 0-2.500-2.500H8.200M10.100 1.800L7.900 4l2.200 2.200"/></svg>
<svg class="a" style="left:1266px;top:10px" width="16" height="16" viewBox="0 0 16 16" fill="none" stroke="#d0d0cb" stroke-width="1.200" stroke-linecap="round" stroke-linejoin="round"><path d="M3.500 1.500l10 6.500-10 6.500z"/></svg>
<svg class="a" style="left:1298px;top:10px" width="16" height="16" viewBox="0 0 16 16" fill="none" stroke="#d0d0cb" stroke-width="1.200" stroke-linecap="round" stroke-linejoin="round"><circle cx="9" cy="8" r="3.600"/><path d="M12.600 8H15.500M5.400 8H.8M3 5.800L.8 8 3 10.200"/></svg>
<svg class="a" style="left:1330px;top:10px" width="16" height="16" viewBox="0 0 16 16" fill="none" stroke="#6a6a65" stroke-width="1.200" stroke-linecap="round" stroke-linejoin="round"><circle cx="8" cy="8" r="3.600"/><path d="M11.600 8H15M4.400 8H1"/></svg>
<svg class="a" style="left:1362px;top:10px" width="16" height="16" viewBox="0 0 16 16" fill="none" stroke="#6a6a65" stroke-width="1.200" stroke-linecap="round" stroke-linejoin="round"><circle cx="7" cy="8" r="3.600"/><path d="M10.600 8H15.200M3.400 8H.5M13 5.800L15.200 8 13 10.200"/></svg>
<svg class="a" style="left:1394px;top:10px" width="16" height="16" viewBox="0 0 16 16" fill="none" stroke="#d0d0cb" stroke-width="1.200" stroke-linecap="round" stroke-linejoin="round"><circle cx="8" cy="8" r="6.700"/><circle cx="6.500" cy="11.300" r="1.100"/><circle cx="6.500" cy="4.600" r="1.100"/><circle cx="10.300" cy="6.800" r="1.100"/><path d="M6.500 5.700v4.500M10.300 7.900c0 1.500-2 1.500-3.800 2"/></svg>
<svg class="a" style="left:1426px;top:10px" width="16" height="16" viewBox="0 0 16 16" fill="none" stroke="#d0d0cb" stroke-width="1.200" stroke-linecap="round" stroke-linejoin="round"><rect x="1.500" y="2" width="13" height="12" rx="1"/><path d="M8 2v12"/></svg>
<svg class="a" style="left:1459px;top:16px" width="14" height="4" viewBox="0 0 14 4"><circle cx="1.700" cy="2" r="1.150" fill="#d0d0cb"/><circle cx="7" cy="2" r="1.150" fill="#d0d0cb"/><circle cx="12.300" cy="2" r="1.150" fill="#d0d0cb"/></svg>
</div>
<div class="a" style="left:378px;top:85px;height:22px;line-height:22px;color:#a9a9a3"><span style="font-size:13px;letter-spacing:0.052px;">src</span></div>
<svg class="a" style="left:400px;top:90.5px" width="7" height="11" viewBox="0 0 7 11"><path d="M1 .8l4.700 4.700L1 10.200" fill="none" stroke="#a9a9a3" stroke-width="1.100"/></svg>
<div class="a" style="left:413px;top:85px;height:22px;line-height:23px;font-size:10.500px;font-weight:bold;color:#2b8ed6;letter-spacing:-.2px">TS</div>
<div class="a" style="left:433px;top:85px;height:22px;line-height:22px;color:#a9a9a3"><span style="font-size:13px;letter-spacing:0.236px;">index.ts</span></div>
<svg class="a" style="left:484.5px;top:90.5px" width="7" height="11" viewBox="0 0 7 11"><path d="M1 .8l4.700 4.700L1 10.200" fill="none" stroke="#a9a9a3" stroke-width="1.100"/></svg>
<svg class="a" style="left:496px;top:92px" width="14.500" height="10" viewBox="0 0 14.500 10" fill="none" stroke="#4aa3e0" stroke-width="1.100"><path d="M2.800 .6H.6v8.800h2.200M11.700 .6h2.200v8.800h-2.200"/><path d="M4 3.600l4.200-1.500 2.600 1.300v3L6.600 8 4 6.600zM4 3.600l2.600 1.300 4.200-1.500M6.600 4.900V8" stroke-width=".9"/></svg>
<div class="a" style="left:515.3px;top:85px;height:22px;line-height:22px;color:#a9a9a3"><span style="font-size:13px;letter-spacing:-0.047px;">main</span></div>
<div class="a" style="left:432px;top:106px;height:19px;line-height:19px;color:#8f908a"><span style="font-size:12.2px;letter-spacing:-0.141px;">You, 2 days ago | 1 author (You)</span></div>
<div class="a" id="code">
<div class="a" style="left:71px;top:361px;width:1287px;height:19px;background:#3e3d32"></div>
<div class="ig" style="left:87px;top:399px;height:57px"></div>
<div class="ig" style="left:87px;top:608px;height:38px"></div>
<div class="ig" style="left:87px;top:741px;height:38px"></div>
<div class="ig" style="left:87px;top:836px;height:38px"></div>
<div class="a" style="left:70px;top:322px;width:219px;height:1px;background:#c6a83c"></div>
<div class="a" style="left:70px;top:322px;width:1px;height:600px;background:#c6a83c"></div>
<div class="a" style="left:281px;top:304px;width:9.400px;height:19px;border:1px solid #76766d;background:rgba(120,120,110,.08)"></div>
<div class="ln" style="top:0px"><span>1</span></div>
<div class="cl" style="top:0px"><span class="k">import</span> express <span class="k">from</span> <span class="s">"express"</span>;</div>
<div class="ln" style="top:19px"><span>2</span></div>
<div class="cl fade" style="top:19px"><span class="k">import</span> https <span class="k">from</span> <span class="s">"https"</span>;</div>
<div class="ln" style="top:38px"><span>3</span></div>
<div class="cl fade" style="top:38px"><span class="k">import</span> fs <span class="k">from</span> <span class="s">"fs"</span>;</div>
<div class="ln" style="top:57px"><span>4</span></div>
<div class="cl" style="top:57px"><span class="k">import</span> <span class="n">*</span> <span class="k">as</span> dotenv <span class="k">from</span> <span class="s">"dotenv"</span>;</div>
<div class="ln" style="top:76px"><span>5</span></div>
<div class="cl" style="top:76px"><span class="k">import</span> <span class="s">"reflect-metadata"</span>;</div>
<div class="ln" style="top:95px"><span>6</span></div>
<div class="cl" style="top:95px"><span class="k">import</span> createError <span class="k">from</span> <span class="s">"http-errors"</span>;</div>
<div class="ln" style="top:114px"><span>7</span></div>
<div class="cl" style="top:114px"><span class="k">import</span> bodyParse <span class="k">from</span> <span class="s">"body-parser"</span>;</div>
<div class="ln" style="top:133px"><span>8</span></div>
<div class="ln" style="top:152px"><span>9</span></div>
<div class="cl" style="top:152px"><span class="k">import</span> <span class="b1">{</span> createConnection <span class="b1">}</span> <span class="k">from</span> <span class="s">"typeorm"</span>;</div>
<div class="ln" style="top:171px"><span>10</span></div>
<div class="cl" style="top:171px"><span class="k">import</span> <span class="b1">{</span> authenticateTokens <span class="b1">}</span> <span class="k">from</span> <span class="s">"./utilities/tokens"</span>;</div>
<div class="ln" style="top:190px"><span>11</span></div>
<div class="cl" style="top:190px"><span class="k">import</span> auth <span class="k">from</span> <span class="s">"./routes/auth"</span>;</div>
<div class="ln" style="top:209px"><span>12</span></div>
<div class="cl" style="top:209px"><span class="k">import</span> update <span class="k">from</span> <span class="s">"./routes/update"</span>;</div>
<div class="ln" style="top:228px"><span>13</span></div>
<div class="cl" style="top:228px"><span class="k">import</span> <span class="b1">{</span> errorCatcher, errorHandler <span class="b1">}</span> <span class="k">from</span> <span class="s">"./utilities/errors"</span>;</div>
<div class="ln" style="top:247px"><span>14</span></div>
<div class="ln" style="top:266px"><span>15</span></div>
<div class="cl" style="top:266px"><span class="t">const</span> PORT <span class="k">=</span> <span class="n">8000</span>;</div>
<div class="ln" style="top:285px"><span>16</span></div>
<div class="ln" style="top:304px"><span>17</span></div>
<div class="cl" style="top:304px"><span class="t">const</span> <span class="f">main</span> <span class="k">=</span> <span class="k">async</span> <span class="b1">()</span> <span class="ar">=&gt;</span> <span class="b1">{</span></div>
<div class="ln" style="top:323px"><span>18</span></div>
<div class="cl" style="top:323px">  dotenv.<span class="f">config</span><span class="b2">()</span>; <span class="c">// Configure reading of .env file</span></div>
<div class="ln" style="top:342px"><span>19</span></div>
<div class="cl" style="top:342px">  <span class="t">const</span> app <span class="k">=</span> <span class="f">express</span><span class="b2">()</span>;</div>
<div class="ln" style="top:361px"><span style="color:#c2c2bf">20</span></div>
<div class="cl" style="top:361px">      <span class="bl">You, 2 days ago • Changed scripts + migrations command + cleanup</span></div>
<div class="ln" style="top:380px"><span>21</span></div>
<div class="cl" style="top:380px">  <span class="c">/**</span></div>
<div class="ln" style="top:399px"><span>22</span></div>
<div class="cl" style="top:399px">  <span class="c"> * Uncomment out these lines for a local https server when running locally</span></div>
<div class="ln" style="top:418px"><span>23</span></div>
<div class="cl" style="top:418px">  <span class="c"> * Apache SSL sorts this out for us on production</span></div>
<div class="ln" style="top:437px"><span>24</span></div>
<div class="cl" style="top:437px">  <span class="c"> */</span></div>
<div class="ln" style="top:456px"><span>25</span></div>
<div class="cl" style="top:456px">  <span class="c">// const server = https.createServer(</span></div>
<div class="ln" style="top:475px"><span>26</span></div>
<div class="cl" style="top:475px">  <span class="c">//   { key: fs.readFileSync("./key.pem"), cert: fs.readFileSync("./cert.pem") },</span></div>
<div class="ln" style="top:494px"><span>27</span></div>
<div class="cl" style="top:494px">  <span class="c">//   app</span></div>
<div class="ln" style="top:513px"><span>28</span></div>
<div class="cl" style="top:513px">  <span class="c">// );</span></div>
<div class="ln" style="top:532px"><span>29</span></div>
<div class="ln" style="top:551px"><span>30</span></div>
<div class="cl" style="top:551px">  <span class="c">// Setup the connection to the database</span></div>
<div class="ln" style="top:570px"><span>31</span></div>
<div class="cl" style="top:570px">  <span class="t">const</span> db <span class="k">=</span> <span class="k">await</span> <span class="f">createConnection</span><span class="b2">()</span>.<span class="f">catch</span><span class="b2">(</span><span class="b3">(</span><span class="p">e</span><span class="b3">)</span> <span class="ar">=&gt;</span> console.<span class="f">log</span><span class="b3">(</span><span class="p">e</span><span class="b3">)</span><span class="b2">)</span>;</div>
<div class="ln" style="top:589px"><span>32</span></div>
<div class="cl" style="top:589px">  <span class="k">if</span> <span class="b2">(</span><span class="k">!</span>db<span class="b2">)</span> <span class="b2">{</span></div>
<div class="ln" style="top:608px"><span>33</span></div>
<div class="cl" style="top:608px">    console.<span class="f">log</span><span class="b3">(</span><span class="s">"Database connection error"</span><span class="b3">)</span>;</div>
<div class="ln" style="top:627px"><span>34</span></div>
<div class="cl" style="top:627px">    <span class="k">return</span>;</div>
<div class="ln" style="top:646px"><span>35</span></div>
<div class="cl" style="top:646px">  <span class="b2">}</span></div>
<div class="ln" style="top:665px"><span>36</span></div>
<div class="ln" style="top:684px"><span>37</span></div>
<div class="cl" style="top:684px">  app.<span class="f">use</span><span class="b2">(</span><span class="f">bodyParse</span>.<span class="f">json</span><span class="b3">()</span><span class="b2">)</span>;</div>
<div class="ln" style="top:703px"><span>38</span></div>
<div class="ln" style="top:722px"><span>39</span></div>
<div class="cl" style="top:722px">  <span class="c">/**</span></div>
<div class="ln" style="top:741px"><span>40</span></div>
<div class="cl" style="top:741px">  <span class="c"> * Route for authentication of the user for our API</span></div>
<div class="ln" style="top:760px"><span>41</span></div>
<div class="cl" style="top:760px">  <span class="c"> */</span></div>
<div class="ln" style="top:779px"><span>42</span></div>
<div class="cl" style="top:779px">  app.<span class="f">post</span><span class="b2">(</span><span class="s">"/auth"</span>, <span class="f">errorCatcher</span><span class="b3">(</span><span class="f">auth</span><span class="b3">)</span><span class="b2">)</span>;</div>
<div class="ln" style="top:798px"><span>43</span></div>
<div class="ln" style="top:817px"><span>44</span></div>
<div class="cl" style="top:817px">  <span class="c">/**</span></div>
<div class="ln" style="top:836px"><span>45</span></div>
<div class="cl" style="top:836px">  <span class="c"> * Route for the updating of the user's activity + getting statuses of following</span></div>
<div class="ln" style="top:855px"><span>46</span></div>
<div class="cl" style="top:855px">  <span class="c"> */</span></div>
<div class="ln" style="top:874px"><span>47</span></div>
<div class="cl" style="top:874px">  app.<span class="f">post</span><span class="b2">(</span><span class="s">"/update"</span>, <span class="f">authenticateTokens</span>, <span class="f">errorCatcher</span><span class="b3">(</span><span class="f">update</span><span class="b3">)</span><span class="b2">)</span>;</div>
<div class="ln" style="top:893px"><span>48</span></div>
</div>
<svg class="a" style="left:1728px;top:107px" width="112" height="134" viewBox="0 0 112 134" shape-rendering="crispEdges"><path d="M0 0h1v2h-1zM4 0h2v2h-2zM15 0h2v2h-2zM0 2h1v2h-1zM4 2h2v2h-2zM13 2h2v2h-2zM0 4h1v2h-1zM4 4h2v2h-2zM10 4h2v2h-2zM0 6h1v2h-1zM4 6h2v2h-2zM19 6h2v2h-2zM0 8h1v2h-1zM4 8h2v2h-2zM0 10h1v2h-1zM4 10h2v2h-2zM19 10h2v2h-2zM0 12h1v2h-1zM4 12h2v2h-2zM17 12h2v2h-2zM0 16h1v2h-1zM4 16h2v2h-2zM28 16h2v2h-2zM0 18h1v2h-1zM4 18h2v2h-2zM30 18h2v2h-2zM0 20h1v2h-1zM4 20h2v2h-2zM12 20h2v2h-2zM0 22h1v2h-1zM4 22h2v2h-2zM14 22h2v2h-2zM0 24h1v2h-1zM4 24h2v2h-2zM38 24h2v2h-2zM16 60h2v2h-2zM2 62h2v2h-2zM4 66h1v2h-1zM6 66h1v2h-1zM8 66h1v2h-1z" fill="#f92672" fill-opacity="0.46"/><path d="M1 0h1v2h-1zM18 0h1v2h-1zM1 2h1v2h-1zM16 2h1v2h-1zM1 4h1v2h-1zM13 4h1v2h-1zM1 6h1v2h-1zM22 6h1v2h-1zM1 8h1v2h-1zM1 10h1v2h-1zM22 10h1v2h-1zM1 12h1v2h-1zM20 12h1v2h-1zM1 16h1v2h-1zM31 16h1v2h-1zM1 18h1v2h-1zM33 18h1v2h-1zM1 20h1v2h-1zM15 20h1v2h-1zM1 22h1v2h-1zM17 22h1v2h-1zM1 24h1v2h-1zM41 24h1v2h-1zM14 60h1v2h-1z" fill="#f92672" fill-opacity="0.92"/><path d="M2 0h2v2h-2zM17 0h1v2h-1zM2 2h2v2h-2zM15 2h1v2h-1zM2 4h2v2h-2zM12 4h1v2h-1zM2 6h2v2h-2zM9 6h2v2h-2zM21 6h1v2h-1zM2 8h2v2h-2zM2 10h2v2h-2zM21 10h1v2h-1zM2 12h2v2h-2zM19 12h1v2h-1zM2 16h2v2h-2zM30 16h1v2h-1zM2 18h2v2h-2zM32 18h1v2h-1zM2 20h2v2h-2zM14 20h1v2h-1zM2 22h2v2h-2zM16 22h1v2h-1zM2 24h2v2h-2zM40 24h1v2h-1zM13 32h5v2h-5zM13 60h1v2h-1zM15 60h1v2h-1zM5 66h1v2h-1zM7 66h1v2h-1zM9 66h1v2h-1z" fill="#f92672" fill-opacity="0.69"/><path d="M7 0h3v2h-3zM11 0h3v2h-3zM7 2h1v2h-1zM10 2h2v2h-2zM8 4h1v2h-1zM12 6h2v2h-2zM15 6h3v2h-3zM7 10h1v2h-1zM9 10h2v2h-2zM12 10h1v2h-1zM16 10h1v2h-1zM7 12h4v2h-4zM12 12h1v2h-1zM14 12h2v2h-2zM9 16h1v2h-1zM11 16h2v2h-2zM14 16h1v2h-1zM16 16h5v2h-5zM23 16h2v2h-2zM9 18h2v2h-2zM12 18h3v2h-3zM17 18h2v2h-2zM20 18h1v2h-1zM22 18h5v2h-5zM7 20h2v2h-2zM10 20h1v2h-1zM7 22h4v2h-4zM12 22h1v2h-1zM9 24h1v2h-1zM12 24h1v2h-1zM15 24h1v2h-1zM17 24h3v2h-3zM23 24h1v2h-1zM26 24h1v2h-1zM29 24h3v2h-3zM33 24h1v2h-1zM2 34h2v2h-2zM5 34h3v2h-3zM8 36h3v2h-3zM8 60h2v2h-2zM51 60h5v2h-5zM57 60h1v2h-1zM7 62h2v2h-2zM4 64h5v2h-5zM10 64h1v2h-1zM2 72h3v2h-3zM2 82h3v2h-3zM2 92h3v2h-3zM2 102h3v2h-3zM2 112h3v2h-3zM2 126h3v2h-3zM25 126h5v2h-5zM31 126h1v2h-1z" fill="#f8f8f2" fill-opacity="0.69"/><path d="M10 0h1v2h-1zM8 2h2v2h-2zM7 4h1v2h-1zM14 6h1v2h-1zM8 10h1v2h-1zM11 10h1v2h-1zM14 10h2v2h-2zM17 10h1v2h-1zM13 12h1v2h-1zM10 16h1v2h-1zM13 16h1v2h-1zM21 16h2v2h-2zM11 18h1v2h-1zM15 18h2v2h-2zM19 18h1v2h-1zM9 20h1v2h-1zM11 22h1v2h-1zM10 24h2v2h-2zM13 24h1v2h-1zM16 24h1v2h-1zM20 24h1v2h-1zM24 24h2v2h-2zM27 24h1v2h-1zM32 24h1v2h-1zM34 24h1v2h-1zM4 34h1v2h-1zM56 60h1v2h-1zM9 64h1v2h-1zM30 126h1v2h-1z" fill="#f8f8f2" fill-opacity="0.46"/><path d="M20 0h1v2h-1zM28 0h1v2h-1zM18 2h1v2h-1zM24 2h1v2h-1zM15 4h1v2h-1zM18 4h1v2h-1zM24 6h1v2h-1zM31 6h1v2h-1zM7 8h1v2h-1zM15 8h1v2h-1zM24 8h1v2h-1zM24 10h1v2h-1zM29 10h1v2h-1zM36 10h1v2h-1zM22 12h1v2h-1zM27 12h1v2h-1zM34 12h1v2h-1zM33 16h1v2h-1zM41 16h1v2h-1zM35 18h1v2h-1zM37 18h1v2h-1zM47 18h1v2h-1zM54 18h1v2h-1zM17 20h1v2h-1zM19 20h1v2h-1zM26 20h1v2h-1zM31 20h1v2h-1zM19 22h1v2h-1zM21 22h1v2h-1zM28 22h1v2h-1zM35 22h1v2h-1zM43 24h1v2h-1zM45 24h1v2h-1zM55 24h1v2h-1zM62 24h1v2h-1zM16 64h1v2h-1zM42 64h1v2h-1zM11 82h2v2h-2zM17 82h1v2h-1zM11 92h2v2h-2zM19 92h1v2h-1zM26 104h1v2h-1zM44 104h1v2h-1zM37 126h1v2h-1zM48 126h1v2h-1z" fill="#e6db74" fill-opacity="0.34"/><path d="M21 0h3v2h-3zM25 0h3v2h-3zM19 2h1v2h-1zM22 2h2v2h-2zM17 4h1v2h-1zM25 6h2v2h-2zM28 6h3v2h-3zM9 8h1v2h-1zM12 8h2v2h-2zM17 8h1v2h-1zM19 8h3v2h-3zM23 8h1v2h-1zM25 10h1v2h-1zM28 10h1v2h-1zM30 10h1v2h-1zM33 10h1v2h-1zM35 10h1v2h-1zM23 12h4v2h-4zM28 12h2v2h-2zM31 12h2v2h-2zM35 16h4v2h-4zM38 18h1v2h-1zM45 18h2v2h-2zM49 18h5v2h-5zM21 20h2v2h-2zM24 20h2v2h-2zM27 20h2v2h-2zM30 20h1v2h-1zM23 22h2v2h-2zM26 22h2v2h-2zM29 22h4v2h-4zM34 22h1v2h-1zM46 24h1v2h-1zM53 24h2v2h-2zM56 24h1v2h-1zM59 24h1v2h-1zM61 24h1v2h-1zM18 64h1v2h-1zM20 64h5v2h-5zM26 64h6v2h-6zM34 64h2v2h-2zM37 64h1v2h-1zM40 64h1v2h-1zM13 82h2v2h-2zM16 82h1v2h-1zM13 92h4v2h-4zM18 92h1v2h-1zM28 104h3v2h-3zM32 104h2v2h-2zM37 104h4v2h-4zM39 126h3v2h-3zM43 126h2v2h-2z" fill="#e6db74" fill-opacity="0.69"/><path d="M24 0h1v2h-1zM20 2h2v2h-2zM16 4h1v2h-1zM27 6h1v2h-1zM8 8h1v2h-1zM10 8h2v2h-2zM14 8h1v2h-1zM18 8h1v2h-1zM22 8h1v2h-1zM26 10h2v2h-2zM31 10h2v2h-2zM34 10h1v2h-1zM30 12h1v2h-1zM33 12h1v2h-1zM34 16h1v2h-1zM39 16h1v2h-1zM39 18h6v2h-6zM48 18h1v2h-1zM20 20h1v2h-1zM23 20h1v2h-1zM29 20h1v2h-1zM22 22h1v2h-1zM25 22h1v2h-1zM33 22h1v2h-1zM47 24h6v2h-6zM57 24h2v2h-2zM60 24h1v2h-1zM19 64h1v2h-1zM32 64h2v2h-2zM38 64h2v2h-2zM41 64h1v2h-1zM15 82h1v2h-1zM17 92h1v2h-1zM34 104h1v2h-1zM36 104h1v2h-1zM43 104h1v2h-1zM42 126h1v2h-1z" fill="#e6db74" fill-opacity="0.46"/><path d="M29 0h1v2h-1zM25 2h1v2h-1zM19 4h1v2h-1zM32 6h1v2h-1zM25 8h1v2h-1zM37 10h1v2h-1zM35 12h1v2h-1zM42 16h1v2h-1zM55 18h1v2h-1zM32 20h1v2h-1zM36 22h1v2h-1zM21 24h1v2h-1zM63 24h1v2h-1zM17 28h1v2h-1zM8 34h1v2h-1zM17 34h1v2h-1zM23 36h1v2h-1zM37 60h1v2h-1zM58 60h1v2h-1zM66 60h1v2h-1zM11 64h1v2h-1zM44 64h1v2h-1zM10 66h1v2h-1zM5 72h1v2h-1zM19 72h1v2h-1zM27 72h1v2h-1zM5 82h1v2h-1zM18 82h1v2h-1zM39 82h1v2h-1zM5 92h1v2h-1zM20 92h1v2h-1zM40 92h1v2h-1zM63 92h1v2h-1zM5 102h1v2h-1zM15 102h1v2h-1zM21 102h1v2h-1zM24 104h1v2h-1zM47 104h1v2h-1zM4 106h1v2h-1zM5 112h1v2h-1zM23 112h1v2h-1zM5 126h1v2h-1zM17 126h1v2h-1zM32 126h1v2h-1zM51 126h1v2h-1zM1 128h1v2h-1zM6 132h1v2h-1z" fill="#f8f8f2" fill-opacity="0.23"/><path d="M7 6h1v2h-1z" fill="#ae81ff" fill-opacity="0.34"/><path d="M16 8h1v2h-1zM40 16h1v2h-1z" fill="#e6db74" fill-opacity="0.92"/><path d="M13 10h1v2h-1zM11 12h1v2h-1zM15 16h1v2h-1zM21 18h1v2h-1zM14 24h1v2h-1zM28 24h1v2h-1zM6 28h4v2h-4zM13 126h4v2h-4z" fill="#f8f8f2" fill-opacity="0.80"/><path d="M7 16h1v2h-1zM26 16h1v2h-1zM7 18h1v2h-1zM28 18h1v2h-1zM7 24h1v2h-1zM36 24h1v2h-1zM19 32h2v2h-2zM25 32h1v2h-1zM8 104h1v2h-1zM46 104h1v2h-1zM0 128h1v2h-1zM4 132h2v2h-2z" fill="#ffd700" fill-opacity="0.46"/><path d="M36 18h1v2h-1zM18 20h1v2h-1zM20 22h1v2h-1zM44 24h1v2h-1zM42 104h1v2h-1zM45 126h3v2h-3z" fill="#e6db74" fill-opacity="0.23"/><path d="M0 28h4v2h-4zM0 32h4v2h-4zM2 36h4v2h-4zM2 60h4v2h-4z" fill="#66d9ef" fill-opacity="0.69"/><path d="M4 28h1v2h-1zM4 32h1v2h-1zM6 36h1v2h-1zM6 60h1v2h-1z" fill="#66d9ef" fill-opacity="0.46"/><path d="M11 28h1v2h-1zM11 32h1v2h-1zM12 36h1v2h-1zM11 60h1v2h-1zM6 62h1v2h-1z" fill="#f92672" fill-opacity="0.34"/><path d="M13 28h4v2h-4zM21 104h3v2h-3z" fill="#ae81ff" fill-opacity="0.80"/><path d="M6 32h1v2h-1zM0 132h1v2h-1z" fill="#a6e22e" fill-opacity="0.92"/><path d="M7 32h1v2h-1zM9 32h1v2h-1zM9 34h3v2h-3zM14 34h1v2h-1zM14 36h3v2h-3zM18 36h3v2h-3zM19 60h1v2h-1zM21 60h2v2h-2zM24 60h1v2h-1zM26 60h5v2h-5zM33 60h2v2h-2zM38 60h2v2h-2zM41 60h2v2h-2zM60 60h2v2h-2zM13 64h2v2h-2zM6 72h3v2h-3zM10 72h4v2h-4zM15 72h1v2h-1zM17 72h2v2h-2zM21 72h3v2h-3zM6 82h3v2h-3zM20 82h1v2h-1zM23 82h1v2h-1zM26 82h1v2h-1zM28 82h3v2h-3zM33 82h2v2h-2zM36 82h1v2h-1zM6 92h3v2h-3zM22 92h2v2h-2zM25 92h3v2h-3zM30 92h2v2h-2zM33 92h1v2h-1zM35 92h5v2h-5zM42 92h1v2h-1zM45 92h1v2h-1zM48 92h1v2h-1zM50 92h3v2h-3zM55 92h4v2h-4zM60 92h1v2h-1zM6 102h3v2h-3zM4 104h3v2h-3zM9 104h1v2h-1zM11 104h2v2h-2zM14 104h1v2h-1zM18 104h1v2h-1zM6 112h3v2h-3zM10 112h1v2h-1zM13 112h1v2h-1zM16 112h3v2h-3zM20 112h1v2h-1zM8 126h1v2h-1zM10 126h2v2h-2zM34 126h2v2h-2zM1 132h1v2h-1zM3 132h1v2h-1z" fill="#a6e22e" fill-opacity="0.69"/><path d="M8 32h1v2h-1zM12 34h2v2h-2zM17 36h1v2h-1zM20 60h1v2h-1zM23 60h1v2h-1zM31 60h2v2h-2zM40 60h1v2h-1zM59 60h1v2h-1zM12 64h1v2h-1zM16 72h1v2h-1zM20 72h1v2h-1zM9 82h1v2h-1zM21 82h2v2h-2zM24 82h1v2h-1zM27 82h1v2h-1zM31 82h1v2h-1zM35 82h1v2h-1zM9 92h1v2h-1zM24 92h1v2h-1zM28 92h2v2h-2zM32 92h1v2h-1zM43 92h2v2h-2zM46 92h1v2h-1zM49 92h1v2h-1zM53 92h1v2h-1zM59 92h1v2h-1zM7 104h1v2h-1zM10 104h1v2h-1zM13 104h1v2h-1zM16 104h2v2h-2zM19 104h1v2h-1zM11 112h2v2h-2zM14 112h1v2h-1zM19 112h1v2h-1zM21 112h1v2h-1zM6 126h2v2h-2zM9 126h1v2h-1zM33 126h1v2h-1zM2 132h1v2h-1z" fill="#a6e22e" fill-opacity="0.46"/><path d="M22 32h2v2h-2zM48 60h2v2h-2zM29 102h2v2h-2zM22 126h2v2h-2z" fill="#66d9ef" fill-opacity="0.34"/><path d="M15 34h2v2h-2zM21 36h2v2h-2zM35 60h2v2h-2zM43 60h1v2h-1zM65 60h1v2h-1zM5 62h1v2h-1zM9 62h1v2h-1zM11 62h1v2h-1zM2 68h1v2h-1zM9 72h1v2h-1zM26 72h1v2h-1zM10 82h1v2h-1zM38 82h1v2h-1zM10 92h1v2h-1zM62 92h1v2h-1zM9 102h1v2h-1zM20 104h1v2h-1zM45 104h1v2h-1zM3 106h1v2h-1zM9 112h1v2h-1zM22 112h1v2h-1zM12 126h1v2h-1zM50 126h1v2h-1z" fill="#da70d6" fill-opacity="0.46"/><path d="M19 34h2v2h-2zM2 40h3v2h-3zM3 42h1v2h-1zM3 44h1v2h-1zM3 46h2v2h-2zM2 48h2v2h-2zM18 48h1v2h-1zM2 50h2v2h-2zM30 50h1v2h-1zM32 50h1v2h-1zM40 50h1v2h-1zM66 50h1v2h-1zM68 50h1v2h-1zM77 50h1v2h-1zM2 52h2v2h-2zM2 54h2v2h-2zM2 58h2v2h-2zM2 76h3v2h-3zM3 78h1v2h-1zM3 80h2v2h-2zM2 86h3v2h-3zM3 88h1v2h-1zM51 88h1v2h-1zM3 90h2v2h-2zM2 96h3v2h-3zM3 98h1v2h-1zM3 100h2v2h-2zM2 110h2v2h-2zM2 116h2v2h-2zM2 118h2v2h-2zM28 118h2v2h-2zM2 120h2v2h-2zM19 120h1v2h-1zM30 120h1v2h-1zM2 122h2v2h-2z" fill="#e6d3a3" fill-opacity="0.34"/><path d="M22 34h1v2h-1zM5 42h1v2h-1zM5 44h1v2h-1zM12 44h3v2h-3zM32 48h1v2h-1zM21 50h1v2h-1zM25 50h1v2h-1zM57 50h1v2h-1zM61 50h1v2h-1zM5 58h1v2h-1zM5 78h1v2h-1zM50 78h3v2h-3zM5 88h1v2h-1zM34 98h3v2h-3zM5 110h1v2h-1zM5 116h1v2h-1zM19 118h4v2h-4zM20 120h1v2h-1z" fill="#e6d3a3" fill-opacity="0.80"/><path d="M23 34h2v2h-2zM27 34h2v2h-2zM30 34h1v2h-1zM33 34h3v2h-3zM37 34h2v2h-2zM40 34h1v2h-1zM44 34h3v2h-3zM51 34h1v2h-1zM6 42h3v2h-3zM11 42h2v2h-2zM15 42h2v2h-2zM20 42h4v2h-4zM27 42h3v2h-3zM32 42h1v2h-1zM35 42h1v2h-1zM38 42h3v2h-3zM43 42h1v2h-1zM46 42h2v2h-2zM49 42h2v2h-2zM52 42h2v2h-2zM57 42h3v2h-3zM62 42h3v2h-3zM66 42h2v2h-2zM70 42h3v2h-3zM75 42h1v2h-1zM6 44h5v2h-5zM16 44h2v2h-2zM20 44h1v2h-1zM23 44h1v2h-1zM25 44h1v2h-1zM27 44h2v2h-2zM32 44h1v2h-1zM35 44h2v2h-2zM38 44h2v2h-2zM41 44h1v2h-1zM43 44h4v2h-4zM49 44h2v2h-2zM5 48h4v2h-4zM11 48h2v2h-2zM14 48h2v2h-2zM20 48h1v2h-1zM23 48h2v2h-2zM26 48h1v2h-1zM28 48h2v2h-2zM31 48h1v2h-1zM33 48h1v2h-1zM35 48h2v2h-2zM9 50h3v2h-3zM15 50h1v2h-1zM18 50h3v2h-3zM24 50h1v2h-1zM26 50h3v2h-3zM33 50h3v2h-3zM37 50h2v2h-2zM44 50h2v2h-2zM51 50h1v2h-1zM54 50h3v2h-3zM60 50h1v2h-1zM62 50h3v2h-3zM69 50h2v2h-2zM74 50h2v2h-2zM7 52h3v2h-3zM6 58h1v2h-1zM8 58h2v2h-2zM12 58h2v2h-2zM15 58h6v2h-6zM23 58h2v2h-2zM27 58h1v2h-1zM30 58h2v2h-2zM33 58h2v2h-2zM36 58h5v2h-5zM6 78h2v2h-2zM9 78h1v2h-1zM12 78h1v2h-1zM15 78h2v2h-2zM18 78h3v2h-3zM23 78h2v2h-2zM27 78h2v2h-2zM30 78h1v2h-1zM34 78h2v2h-2zM37 78h3v2h-3zM43 78h1v2h-1zM46 78h2v2h-2zM6 88h2v2h-2zM9 88h1v2h-1zM12 88h1v2h-1zM16 88h2v2h-2zM19 88h4v2h-4zM25 88h2v2h-2zM28 88h1v2h-1zM32 88h2v2h-2zM35 88h3v2h-3zM40 88h1v2h-1zM42 88h2v2h-2zM46 88h1v2h-1zM49 88h1v2h-1zM53 88h2v2h-2zM58 88h2v2h-2zM61 88h1v2h-1zM63 88h1v2h-1zM65 88h4v2h-4zM70 88h1v2h-1zM74 88h1v2h-1zM77 88h1v2h-1zM80 88h2v2h-2zM6 98h1v2h-1zM8 98h2v2h-2zM11 98h3v2h-3zM15 98h1v2h-1zM17 98h2v2h-2zM22 98h2v2h-2zM25 98h1v2h-1zM27 98h1v2h-1zM29 98h2v2h-2zM32 98h1v2h-1zM38 98h1v2h-1zM41 98h1v2h-1zM6 110h2v2h-2zM10 110h2v2h-2zM13 110h3v2h-3zM17 110h1v2h-1zM20 110h1v2h-1zM23 110h1v2h-1zM26 110h4v2h-4zM31 110h1v2h-1zM35 110h1v2h-1zM38 110h3v2h-3zM6 116h3v2h-3zM11 116h2v2h-2zM16 116h1v2h-1zM19 116h1v2h-1zM22 116h2v2h-2zM25 116h2v2h-2zM28 116h2v2h-2zM5 118h2v2h-2zM8 118h2v2h-2zM14 118h1v2h-1zM16 118h2v2h-2zM7 120h5v2h-5zM13 120h1v2h-1zM16 120h2v2h-2zM21 120h3v2h-3zM25 120h2v2h-2z" fill="#e6d3a3" fill-opacity="0.69"/><path d="M25 34h2v2h-2zM29 34h1v2h-1zM32 34h1v2h-1zM36 34h1v2h-1zM41 34h1v2h-1zM48 34h3v2h-3zM13 42h1v2h-1zM17 42h1v2h-1zM19 42h1v2h-1zM25 42h2v2h-2zM31 42h1v2h-1zM33 42h1v2h-1zM37 42h1v2h-1zM41 42h1v2h-1zM44 42h2v2h-2zM51 42h1v2h-1zM54 42h1v2h-1zM61 42h1v2h-1zM65 42h1v2h-1zM69 42h1v2h-1zM73 42h2v2h-2zM18 44h2v2h-2zM22 44h1v2h-1zM24 44h1v2h-1zM29 44h1v2h-1zM31 44h1v2h-1zM33 44h1v2h-1zM42 44h1v2h-1zM47 44h2v2h-2zM9 48h1v2h-1zM13 48h1v2h-1zM16 48h1v2h-1zM21 48h2v2h-2zM27 48h1v2h-1zM30 48h1v2h-1zM34 48h1v2h-1zM37 48h2v2h-2zM7 50h1v2h-1zM14 50h1v2h-1zM17 50h1v2h-1zM22 50h2v2h-2zM29 50h1v2h-1zM41 50h1v2h-1zM46 50h2v2h-2zM50 50h1v2h-1zM53 50h1v2h-1zM58 50h2v2h-2zM65 50h1v2h-1zM71 50h2v2h-2zM78 50h1v2h-1zM80 50h1v2h-1zM5 54h1v2h-1zM7 58h1v2h-1zM11 58h1v2h-1zM21 58h2v2h-2zM26 58h1v2h-1zM29 58h1v2h-1zM35 58h1v2h-1zM8 78h1v2h-1zM11 78h1v2h-1zM13 78h1v2h-1zM17 78h1v2h-1zM21 78h2v2h-2zM25 78h2v2h-2zM31 78h1v2h-1zM33 78h1v2h-1zM40 78h1v2h-1zM42 78h1v2h-1zM44 78h1v2h-1zM48 78h1v2h-1zM8 88h1v2h-1zM11 88h1v2h-1zM13 88h1v2h-1zM15 88h1v2h-1zM23 88h2v2h-2zM29 88h1v2h-1zM31 88h1v2h-1zM38 88h1v2h-1zM44 88h2v2h-2zM47 88h2v2h-2zM55 88h3v2h-3zM62 88h1v2h-1zM64 88h1v2h-1zM71 88h1v2h-1zM73 88h1v2h-1zM75 88h2v2h-2zM79 88h1v2h-1zM7 98h1v2h-1zM16 98h1v2h-1zM19 98h1v2h-1zM21 98h1v2h-1zM24 98h1v2h-1zM28 98h1v2h-1zM39 98h2v2h-2zM42 98h1v2h-1zM9 110h1v2h-1zM16 110h1v2h-1zM21 110h2v2h-2zM24 110h1v2h-1zM30 110h1v2h-1zM32 110h1v2h-1zM13 116h1v2h-1zM15 116h1v2h-1zM17 116h1v2h-1zM20 116h2v2h-2zM27 116h1v2h-1zM30 116h1v2h-1zM7 118h1v2h-1zM10 118h1v2h-1zM12 118h2v2h-2zM15 118h1v2h-1zM18 118h1v2h-1zM25 118h2v2h-2zM31 118h1v2h-1zM12 120h1v2h-1zM15 120h1v2h-1zM18 120h1v2h-1zM24 120h1v2h-1zM31 120h1v2h-1zM5 122h2v2h-2z" fill="#e6d3a3" fill-opacity="0.46"/><path d="M43 34h1v2h-1zM25 48h1v2h-1zM12 50h1v2h-1zM16 50h1v2h-1zM31 50h1v2h-1zM36 50h1v2h-1zM42 50h1v2h-1zM48 50h1v2h-1zM52 50h1v2h-1zM67 50h1v2h-1zM73 50h1v2h-1zM81 50h1v2h-1zM6 54h1v2h-1zM39 88h1v2h-1zM11 118h1v2h-1zM23 118h1v2h-1zM14 120h1v2h-1zM27 120h3v2h-3zM32 120h1v2h-1zM7 122h1v2h-1z" fill="#e6d3a3" fill-opacity="0.23"/><path d="M9 42h2v2h-2zM56 42h1v2h-1zM39 50h1v2h-1zM76 50h1v2h-1zM78 88h1v2h-1zM5 98h1v2h-1zM18 110h1v2h-1zM34 110h1v2h-1zM37 110h1v2h-1zM9 116h2v2h-2z" fill="#e6d3a3" fill-opacity="0.92"/><path d="M25 60h1v2h-1zM14 72h1v2h-1zM25 82h1v2h-1zM34 92h1v2h-1zM47 92h1v2h-1zM15 104h1v2h-1zM15 112h1v2h-1z" fill="#a6e22e" fill-opacity="0.80"/><path d="M44 60h1v2h-1zM46 60h1v2h-1zM62 60h1v2h-1zM64 60h1v2h-1zM15 64h1v2h-1zM43 64h1v2h-1zM24 72h2v2h-2zM32 82h1v2h-1zM37 82h1v2h-1zM54 92h1v2h-1zM61 92h1v2h-1zM10 102h1v2h-1zM27 102h1v2h-1zM32 102h1v2h-1zM2 106h1v2h-1zM19 126h2v2h-2zM36 126h1v2h-1zM49 126h1v2h-1z" fill="#87cefa" fill-opacity="0.46"/><path d="M45 60h1v2h-1zM63 60h1v2h-1zM13 102h2v2h-2zM19 102h2v2h-2zM23 102h3v2h-3z" fill="#fd971f" fill-opacity="0.69"/><path d="M17 64h1v2h-1zM27 104h1v2h-1zM38 126h1v2h-1z" fill="#e6db74" fill-opacity="0.80"/><path d="M11 102h1v2h-1zM17 102h1v2h-1z" fill="#fd971f" fill-opacity="0.34"/><path d="M12 102h1v2h-1zM18 102h1v2h-1zM26 102h1v2h-1z" fill="#fd971f" fill-opacity="0.46"/></svg>
<div class="a" style="left:1728px;top:107px;width:112px;height:134px;background:repeating-linear-gradient(rgba(39,40,34,0) 0,rgba(39,40,34,0) 1px,rgba(39,40,34,.4) 1px,rgba(39,40,34,.4) 2px)"></div>
<div class="a" style="left:1728px;top:145px;width:112px;height:2px;background:#4b4b43"></div>
<div class="a" style="left:1840px;top:107px;width:1px;height:921px;background:#45463f"></div>
<div class="a" style="left:1840px;top:107px;width:14px;height:1px;background:#45463f"></div>
<div class="a" style="left:1841px;top:264px;width:13px;height:2px;background:#c9c9c4"></div>
<div class="a" id="status">
<svg class="a" style="left:15.5px;top:4px" width="14" height="14" viewBox="0 0 16 16" fill="none" stroke="#fff" stroke-width="1.2" stroke-linecap="round" stroke-linejoin="round"><circle cx="4.500" cy="3" r="1.700"/><circle cx="4.500" cy="13" r="1.700"/><circle cx="11.500" cy="5" r="1.700"/><path d="M4.500 4.700v6.600M11.500 6.700c0 2.500-3 2.800-5 3.300-1.200.3-2 .8-2 1.500"/></svg>
<div class="si" style="left:33px"><span style="font-size:12px;letter-spacing:0.219px;">master</span></div>
<svg class="a" style="left:86.5px;top:4px" width="14" height="14" viewBox="0 0 16 16" fill="none" stroke="#fff" stroke-width="1.2" stroke-linecap="round" stroke-linejoin="round"><path d="M3 8.200A5 5 0 0 1 12.600 6.200M13 7.800A5 5 0 0 1 3.400 9.800"/><path d="M10.300 6.400l2.700.200.400-2.700M5.700 9.600L3 9.400l-.4 2.700"/></svg>
<svg class="a" style="left:116.5px;top:4px" width="14" height="14" viewBox="0 0 16 16" fill="none" stroke="#fff" stroke-width="1.2" stroke-linecap="round" stroke-linejoin="round"><circle cx="8" cy="8" r="6.300"/><path d="M5.600 5.600l4.800 4.800M10.400 5.600l-4.800 4.800"/></svg>
<div class="si" style="left:133px"><span style="font-size:12px;letter-spacing:-0.387px;">0</span></div>
<svg class="a" style="left:142.5px;top:4px" width="14" height="14" viewBox="0 0 16 16" fill="none" stroke="#fff" stroke-width="1.2" stroke-linecap="round" stroke-linejoin="round"><path d="M8 1.800L14.700 14H1.300z"/><path d="M8 6.300v4M8 11.800v.4"/></svg>
<div class="si" style="left:160px"><span style="font-size:12px;letter-spacing:-0.387px;">0</span></div>
<svg class="a" style="left:1008px;top:4px" width="14" height="14" viewBox="0 0 16 16" fill="none" stroke="#fff" stroke-width="1.2" stroke-linecap="round" stroke-linejoin="round"><path d="M11.500 1.800l2.700 2.700L5.200 13.500 1.500 14.500l1-3.700zM10 3.300l2.700 2.700"/></svg>
<div class="si" style="left:1025px"><span style="font-size:12px;letter-spacing:0.016px;">Edit Custom Status</span></div>
<svg class="a" style="left:1146px;top:4px" width="12" height="14" viewBox="2 0 12 16" fill="none" stroke="#fff" stroke-width="1.2" stroke-linecap="round" stroke-linejoin="round"><circle cx="8" cy="8" r="2.800"/><path d="M8 1v4.200M8 10.800V15"/></svg>
<div class="si" style="left:1160.5px"><span style="font-size:12px;letter-spacing:-0.143px;">You, 2 days ago</span></div>
<div class="si" style="left:1260px"><span style="font-size:12px;letter-spacing:-0.243px;">Ln 20, Col 1</span></div>
<div class="si" style="left:1338.6px"><span style="font-size:12px;letter-spacing:-0.497px;">Spaces: 2</span></div>
<div class="si" style="left:1403.8px"><span style="font-size:12px;letter-spacing:-0.360px;">UTF-8</span></div>
<div class="si" style="left:1452px"><span style="font-size:12px;letter-spacing:-0.808px;">LF</span></div>
<div class="si" style="left:1480.7px"><span style="font-size:12px;letter-spacing:0.110px;">TypeScript</span></div>
<svg class="a" style="left:1554.5px;top:4px" width="14" height="14" viewBox="0 0 16 16" fill="none" stroke="#fff" stroke-width="1.2" stroke-linecap="round" stroke-linejoin="round"><circle cx="8" cy="7" r="1.600" fill="#fff"/><path d="M8 8.600V15"/><path d="M4.800 10.200a4.500 4.500 0 1 1 6.400 0M3 12.200a7 7 0 1 1 10 0" stroke-width="1.100"/></svg>
<div class="si" style="left:1571.5px"><span style="font-size:12px;letter-spacing:-0.308px;">Go Live</span></div>
<div class="si" style="left:1627.5px"><span style="font-size:12px;letter-spacing:-0.321px;">4.1.4</span></div>
<svg class="a" style="left:1667.5px;top:4px" width="14" height="14" viewBox="0 0 16 16" fill="none" stroke="#fff" stroke-width="1.2" stroke-linecap="round" stroke-linejoin="round"><path d="M1 9l3 3.500L10.500 4M7 10.800l1.500 1.700L15 4" stroke="#d0d0ca" stroke-width="1"/></svg>
<div class="si" style="left:1685.7px"><span style="font-size:12px;letter-spacing:-0.177px;">ESLint</span></div>
<div class="si" style="left:1736.5px"><span style="font-size:12px;letter-spacing:0.402px;">Prettier</span></div>
<svg class="a" style="left:1795.5px;top:4px" width="14" height="14" viewBox="0 0 16 16" fill="none" stroke="#fff" stroke-width="1.2" stroke-linecap="round" stroke-linejoin="round"><path d="M7.500 2.500h7v5h-3.500l-1.500 1.500"/><circle cx="5.500" cy="7.500" r="2.200"/><path d="M1.500 14.500c.3-2.500 2-3.700 4-3.700s3.700 1.200 4 3.700"/></svg>
<svg class="a" style="left:1825.5px;top:4px" width="14" height="14" viewBox="0 0 16 16" fill="none" stroke="#fff" stroke-width="1.2" stroke-linecap="round" stroke-linejoin="round"><path d="M8 1.800c-2.500 0-4 1.800-4 4.200v3.500L2.500 12h11L12 9.500V6c0-2.400-1.500-4.200-4-4.200zM6.800 12.200a1.200 1.200 0 0 0 2.400 0"/></svg>
</div>
</body></html>
